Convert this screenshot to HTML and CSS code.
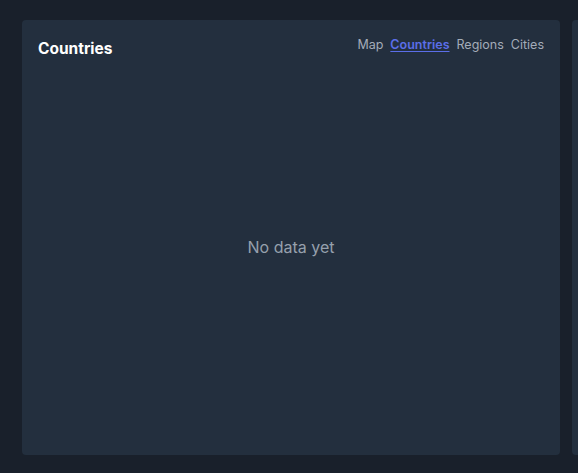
FILE: index.html
```html
<!DOCTYPE html>
<html lang="en">
<head>
    <meta charset="UTF-8">
    <meta name="viewport" content="width=device-width, initial-scale=1.0">
    <title>Locations</title>
    <link rel="stylesheet" href="styles.css">
</head>
<body>

    <div class="panels">
        <div class="panel">
            <div class="panel-head">
                <h3>Countries</h3>
                <div class="tabs">
                    <a href="#">Map</a>
                    <a href="#" class="active">Countries</a>
                    <a href="#">Regions</a>
                    <a href="#">Cities</a>
                </div>
            </div>
            <div class="empty">No data yet</div>
        </div>
        <div class="panel"></div>
    </div>

</body>
</html>
```

FILE: styles.css
```css
body {
    margin: 0;
    overflow: hidden;
    background: #19202b;
    font-family: Inter, "Noto Sans", sans-serif;
    color: white;
}

.panels {
    display: flex;
    gap: 12px;
    padding: 20px 0 0 22px;
    overflow: hidden;
}

.panel {
    flex-shrink: 0;
    width: 538px;
    height: 435px;
    background: #232f3e;
    border-radius: 4px;
    display: flex;
    flex-direction: column;
}

.panel-head {
    display: flex;
    justify-content: space-between;
    align-items: flex-start;
    padding: 17px 16px 0 16px;
}

h3 {
    margin: 0;
    font-size: 15.5px;
    font-weight: 700;
    line-height: 20px;
    padding-top: 2px;
}

.tabs {
    display: flex;
    gap: 7px;
    font-size: 12.5px;
    line-height: 16px;
}

.tabs a {
    color: #a3acb9;
    text-decoration: none;
}

.tabs a.active {
    color: #5b6ee8;
    font-weight: 600;
    text-decoration: underline;
    text-underline-offset: 2px;
}

.empty {
    flex: 1;
    display: flex;
    align-items: center;
    justify-content: center;
    padding-bottom: 20px;
    font-size: 16px;
    color: #96a0ad;
}
```
